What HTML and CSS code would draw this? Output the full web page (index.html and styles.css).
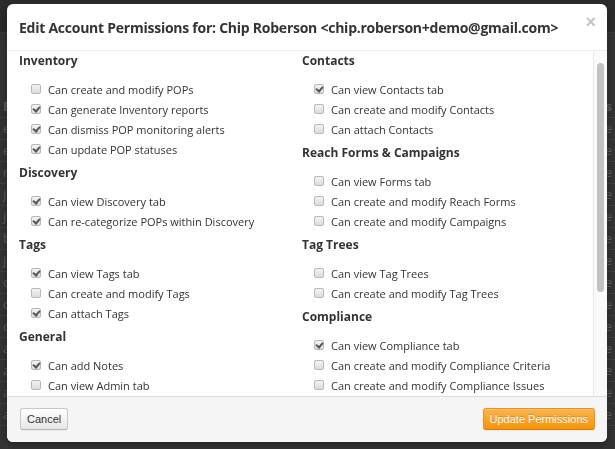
FILE: index.html
```html
<!DOCTYPE html>
<html lang="en">
<head>
    <meta charset="UTF-8">
    <meta name="viewport" content="width=device-width, initial-scale=1.0">
    <title>Edit Account Permissions</title>
    <link rel="stylesheet" href="styles.css">
</head>
<body>
    <!-- page behind the dialog -->
    <div class="page">
        <div class="topbar"></div>
        <div class="subbar"></div>
        <table class="bg-table">
            <tr><th class="first">E</th><th class="last">s</th></tr>
            <tr><td class="first">e</td><td class="last">e</td></tr>
            <tr><td class="first">e</td><td class="last">e</td></tr>
            <tr><td class="first">n</td><td class="last">e</td></tr>
            <tr><td class="first">j</td><td class="last">e</td></tr>
            <tr><td class="first">j</td><td class="last">e</td></tr>
            <tr><td class="first">b</td><td class="last">e</td></tr>
            <tr><td class="first">j</td><td class="last">e</td></tr>
            <tr><td class="first">c</td><td class="last">e</td></tr>
            <tr><td class="first">c</td><td class="last">e</td></tr>
            <tr><td class="first">c</td><td class="last">e</td></tr>
            <tr><td class="first">a</td><td class="last">e</td></tr>
            <tr><td class="first">a</td><td class="last">e</td></tr>
            <tr><td class="first">a</td><td class="last">e</td></tr>
            <tr><td class="first">a</td><td class="last">e</td></tr>
        </table>
    </div>

    <div class="modal">
        <div class="modal-header">
            <h3>Edit Account Permissions for: Chip Roberson &lt;chip.roberson+demo@gmail.com&gt;</h3>
            <span class="close">&times;</span>
        </div>

        <div class="modal-body">
            <div class="columns">
                <div class="col">
                    <div class="group">
                        <h4>Inventory</h4>
                        <ul>
                            <li><span class="cb"></span>Can create and modify POPs</li>
                            <li><span class="cb on"></span>Can generate Inventory reports</li>
                            <li><span class="cb on"></span>Can dismiss POP monitoring alerts</li>
                            <li><span class="cb on"></span>Can update POP statuses</li>
                        </ul>
                    </div>
                    <div class="group">
                        <h4>Discovery</h4>
                        <ul>
                            <li><span class="cb on"></span>Can view Discovery tab</li>
                            <li><span class="cb on"></span>Can re-categorize POPs within Discovery</li>
                        </ul>
                    </div>
                    <div class="group">
                        <h4>Tags</h4>
                        <ul>
                            <li><span class="cb on"></span>Can view Tags tab</li>
                            <li><span class="cb"></span>Can create and modify Tags</li>
                            <li><span class="cb on"></span>Can attach Tags</li>
                        </ul>
                    </div>
                    <div class="group">
                        <h4>General</h4>
                        <ul>
                            <li><span class="cb on"></span>Can add Notes</li>
                            <li><span class="cb"></span>Can view Admin tab</li>
                        </ul>
                    </div>
                </div>

                <div class="col">
                    <div class="group">
                        <h4>Contacts</h4>
                        <ul>
                            <li><span class="cb on"></span>Can view Contacts tab</li>
                            <li><span class="cb"></span>Can create and modify Contacts</li>
                            <li><span class="cb"></span>Can attach Contacts</li>
                        </ul>
                    </div>
                    <div class="group">
                        <h4>Reach Forms &amp; Campaigns</h4>
                        <ul>
                            <li><span class="cb"></span>Can view Forms tab</li>
                            <li><span class="cb"></span>Can create and modify Reach Forms</li>
                            <li><span class="cb"></span>Can create and modify Campaigns</li>
                        </ul>
                    </div>
                    <div class="group">
                        <h4>Tag Trees</h4>
                        <ul>
                            <li><span class="cb"></span>Can view Tag Trees</li>
                            <li><span class="cb"></span>Can create and modify Tag Trees</li>
                        </ul>
                    </div>
                    <div class="group">
                        <h4>Compliance</h4>
                        <ul>
                            <li><span class="cb on"></span>Can view Compliance tab</li>
                            <li><span class="cb"></span>Can create and modify Compliance Criteria</li>
                            <li><span class="cb"></span>Can create and modify Compliance Issues</li>
                        </ul>
                    </div>
                </div>
            </div>

            <div class="scrollbar">
                <div class="thumb"></div>
            </div>
        </div>

        <div class="modal-footer">
            <button class="btn">Cancel</button>
            <button class="btn btn-warning">Update Permissions</button>
        </div>
    </div>
</body>
</html>
```

FILE: styles.css
```css
* {
    margin: 0;
    padding: 0;
    box-sizing: border-box;
}

body {
    background: #333;
    font-family: "Open Sans", Arial, sans-serif;
    overflow: hidden;
    height: 449px;
}

/* page behind the dialog */
.page {
    color: #5c5c5c;
    font-size: 13px;
}

.topbar {
    height: 33px;
    background: #2b2b2b;
    border-bottom: 1px solid #3a3a3a;
}

.subbar {
    height: 62px;
}

.bg-table {
    width: 100%;
    border-collapse: collapse;
}

.bg-table th,
.bg-table td {
    height: 22px;
    border-bottom: 1px solid #404040;
    font-weight: normal;
}

.bg-table th {
    font-weight: bold;
}

.bg-table .first {
    text-align: left;
    padding-left: 3px;
}

.bg-table .last {
    text-align: right;
    padding-right: 3px;
}

/* dialog */
.modal {
    position: fixed;
    left: 7px;
    top: 4px;
    width: 600px;
    height: 438px;
    background: #fff;
    border-radius: 6px;
    box-shadow: 0 3px 7px rgba(0,0,0,0.3);
    display: flex;
    flex-direction: column;
    overflow: hidden;
}

.modal-header {
    height: 47px;
    flex: none;
    display: flex;
    align-items: center;
    justify-content: space-between;
    padding: 0 11px 0 12px;
    border-bottom: 1px solid #eee;
}

.modal-header h3 {
    font-size: 14px;
    font-weight: 700;
    color: #333;
    white-space: nowrap;
    letter-spacing: -0.25px;
}

.close {
    color: #c4c4c4;
    font-family: Arial, sans-serif;
    font-size: 18px;
    font-weight: bold;
    line-height: 1;
    margin-top: -10px;
}

.modal-body {
    flex: 1;
    display: flex;
    overflow: hidden;
}

.columns {
    flex: 1;
    display: grid;
    grid-template-columns: 283px 1fr;
    padding: 0 0 0 12px;
}

.scrollbar {
    width: 14px;
    flex: none;
    background: #fafafa;
    border-left: 1px solid #e8e8e8;
    padding: 12px 3px 0 3px;
}

.thumb {
    height: 229px;
    background: #c2c2c2;
    border-radius: 4px;
}

.group {
    margin-bottom: 4px;
}

.group h4 {
    font-size: 12px;
    font-weight: 700;
    color: #333;
    line-height: 20px;
    margin-bottom: 8px;
}

.group ul {
    list-style: none;
}

.group li {
    display: flex;
    align-items: center;
    height: 20px;
    padding-left: 12px;
    font-size: 11px;
    color: #333;
}

.cb {
    position: relative;
    width: 10px;
    height: 10px;
    margin-right: 7px;
    border: 1px solid #b8b8b8;
    border-radius: 2px;
    background: linear-gradient(#f4f4f4, #dcdcdc);
    flex: none;
}

.cb.on::after {
    content: "";
    position: absolute;
    left: 2px;
    top: 0;
    width: 3px;
    height: 5px;
    border-right: 2px solid #555;
    border-bottom: 2px solid #555;
    transform: rotate(40deg);
}

.modal-footer {
    height: 46px;
    flex: none;
    display: flex;
    align-items: center;
    justify-content: space-between;
    padding: 0 12px 1px 13px;
    background: #f5f5f5;
    border-top: 1px solid #ddd;
}

.btn {
    font-family: "Liberation Sans", Arial, sans-serif;
    font-size: 11px;
    height: 22px;
    padding: 0 6px;
    color: #333;
    white-space: nowrap;
    border: 1px solid #c8c8c8;
    border-bottom-color: #b3b3b3;
    border-radius: 3px;
    background: linear-gradient(#fff, #e6e6e6);
    box-shadow: inset 0 1px 0 rgba(255,255,255,0.2), 0 1px 2px rgba(0,0,0,0.05);
}

.btn-warning {
    color: #fff;
    padding: 0 6px;
    border-color: #f0901a #f0901a #d57a08;
    background: linear-gradient(#fbb450, #f89406);
    text-shadow: 0 -1px 0 rgba(0,0,0,0.2);
}
```
